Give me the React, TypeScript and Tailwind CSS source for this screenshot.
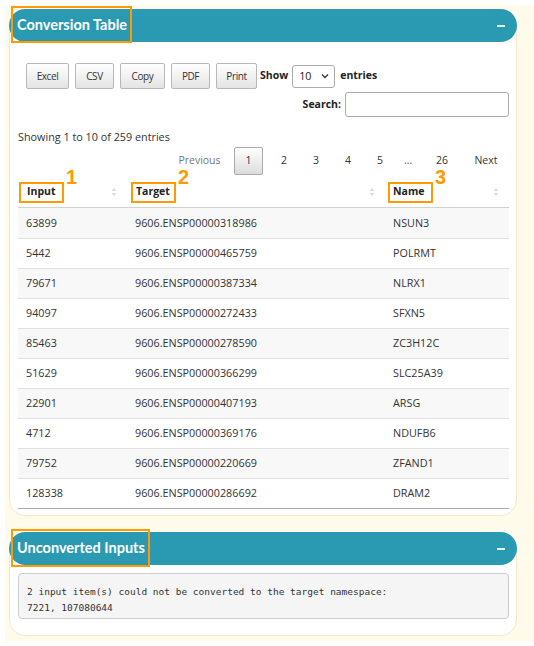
import React from "react";

const rows = [
  ["63899", "9606.ENSP00000318986", "NSUN3"],
  ["5442", "9606.ENSP00000465759", "POLRMT"],
  ["79671", "9606.ENSP00000387334", "NLRX1"],
  ["94097", "9606.ENSP00000272433", "SFXN5"],
  ["85463", "9606.ENSP00000278590", "ZC3H12C"],
  ["51629", "9606.ENSP00000366299", "SLC25A39"],
  ["22901", "9606.ENSP00000407193", "ARSG"],
  ["4712", "9606.ENSP00000369176", "NDUFB6"],
  ["79752", "9606.ENSP00000220669", "ZFAND1"],
  ["128338", "9606.ENSP00000286692", "DRAM2"],
];

const font = { fontFamily: "'Open Sans', 'Noto Sans', sans-serif" };

function SortIcon() {
  return (
    <svg width="6" height="10" viewBox="0 0 6 10" className="shrink-0">
      <path d="M3 1 L5.5 4 H0.5 Z" fill="#dadada" />
      <path d="M3 9 L5.5 6 H0.5 Z" fill="#dadada" />
    </svg>
  );
}

function Header({ title, boxW, boxH }: { title: string; boxW: number; boxH: number }) {
  return (
    <div className="relative -mx-px -mt-px h-[33px] rounded-full bg-[#2a9ab3] flex items-center justify-between pl-[8px] pr-[12px]">
      <span
        className="text-white font-bold text-[14.5px] leading-none"
        style={{ fontFamily: "Lato, 'Noto Sans', sans-serif" }}
      >
        {title}
      </span>
      <span className="block w-[8px] h-[2px] bg-white/90" />
      <div
        className="absolute left-[2px] top-[-3px] border-2 border-[#ff9a00]"
        style={{ width: boxW, height: boxH }}
      />
    </div>
  );
}

function Btn({ label, w }: { label: string; w: number }) {
  return (
    <div
      className="h-[26px] flex items-center justify-center border border-[#b8b8b8] rounded-[2px] bg-gradient-to-b from-white to-[#e4e4e4] text-[10px] tracking-[-0.4px] text-[#333]"
      style={{ width: w }}
    >
      {label}
    </div>
  );
}

function HeadCell({
  label,
  n,
  colClass,
  boxClass,
}: {
  label: string;
  n: string;
  colClass: string;
  boxClass: string;
}) {
  return (
    <div className={`h-[30px] flex items-center justify-between pr-[10px] ${colClass}`}>
      <div className={`relative ${boxClass}`}>
        <div className="border-2 border-[#ff9a00] h-[21px] w-[45px] flex items-center">
          <span className="font-bold text-[10.5px] text-[#222]">{label}</span>
        </div>
        <span
          className="absolute left-[calc(100%+2px)] top-[-15px] text-[#ff9a00] font-bold text-[20px] leading-none"
          style={{ fontFamily: "'Liberation Sans', Arial, sans-serif" }}
        >
          {n}
        </span>
      </div>
      <SortIcon />
    </div>
  );
}

export default function App() {
  return (
    <div className="bg-white w-[534px] h-[646px] pl-[5px] pt-[5px]" style={font}>
      <div className="bg-[#fffbea] h-[637px] pl-[4px] pr-[17px] pt-[4px]">
        {/* Card 1 */}
        <div className="rounded-[16px] border border-[#f6e6cb] bg-white h-[507px]">
          <Header title="Conversion Table" boxW={121} boxH={37} />
          <div className="pl-[8px] pr-[7px]">
            <div className="flex items-center mt-[21px] pl-[8px] h-[26px]">
              <div className="flex gap-[6px]">
                <Btn label="Excel" w={43} />
                <Btn label="CSV" w={39} />
                <Btn label="Copy" w={45} />
                <Btn label="PDF" w={39} />
                <Btn label="Print" w={41} />
              </div>
              <span className="ml-[3px] font-bold text-[10.5px] text-[#222]">Show</span>
              <div className="ml-[4px] w-[43px] h-[23px] border border-[#aaa] rounded-[3px] flex items-center justify-between pl-[6px] pr-[5px] text-[10.8px] text-[#222]">
                <span>10</span>
                <svg width="8" height="6" viewBox="0 0 8 6">
                  <path d="M1 1.5 L4 4.5 L7 1.5" stroke="#333" strokeWidth="1.3" fill="none" />
                </svg>
              </div>
              <span className="ml-[5px] font-bold text-[10.5px] text-[#222]">entries</span>
            </div>
            <div className="flex items-center justify-end mt-[3px]">
              <span className="font-bold text-[10.5px] text-[#222]">Search:</span>
              <div className="ml-[4px] w-[164px] h-[25px] border border-[#aaa] rounded-[3px] bg-white" />
            </div>
            <div className="mt-[12px] text-[10.8px] text-[#333] leading-[16px]">Showing 1 to 10 of 259 entries</div>
            <div className="flex items-center mt-[2px] text-[10.5px] text-[#333] h-[28px]">
              <span className="ml-[151px] w-[61px] text-center text-[#777]">Previous</span>
              <div className="ml-[4px] w-[29px] h-[28px] border border-[#aaa] rounded-[2px] bg-gradient-to-b from-white to-[#dcdcdc] flex items-center justify-center">1</div>
              <span className="ml-[5px] w-[32px] text-center">2</span>
              <span className="w-[32px] text-center">3</span>
              <span className="w-[32px] text-center">4</span>
              <span className="w-[32px] text-center">5</span>
              <span className="w-[24px] text-center text-[#555]">…</span>
              <span className="ml-[6px] w-[32px] text-center">26</span>
              <span className="ml-[13px] w-[30px] text-center">Next</span>
            </div>
            {/* Table */}
            <div className="mt-[2px]">
              <div className="flex border-b border-[#d2d2d2]">
                <HeadCell label="Input" n="1" colClass="w-[109px]" boxClass="ml-[1px] [&>div]:pl-[6px]" />
                <HeadCell label="Target" n="2" colClass="w-[258px]" boxClass="ml-[4px] [&>div]:pl-[3px]" />
                <HeadCell label="Name" n="3" colClass="flex-1" boxClass="ml-[3px] [&>div]:pl-[3px]" />
              </div>
              <div className="border-b border-[#aaaaaa]">
                {rows.map((r, i) => (
                  <div
                    key={i}
                    className={`flex h-[30px] items-center text-[10.8px] text-[#333] ${i > 0 ? "border-t border-[#e0e0e0]" : ""} ${i % 2 === 0 ? "bg-[#f8f8f8]" : "bg-white"}`}
                  >
                    <div className="w-[109px] pl-[8px]">{r[0]}</div>
                    <div className="w-[258px] pl-[8px]">{r[1]}</div>
                    <div className="flex-1 pl-[8px]">{r[2]}</div>
                  </div>
                ))}
              </div>
            </div>
          </div>
        </div>
        {/* Card 2 */}
        <div className="mt-[16px] rounded-[16px] border border-[#f6e6cb] bg-white h-[104px]">
          <Header title="Unconverted Inputs" boxW={139} boxH={38} />
          <div className="pl-[8px] pr-[7px] mt-[8px]">
            <div
              className="bg-[#f5f5f5] border border-[#cccccc] rounded-[4px] h-[46px] pl-[8px] pt-[10px] text-[9.5px] leading-[16px] text-[#333] whitespace-pre"
              style={{ fontFamily: "'DejaVu Sans Mono', monospace" }}
            >
              {"2 input item(s) could not be converted to the target namespace:\n7221, 107080644"}
            </div>
          </div>
        </div>
      </div>
    </div>
  );
}
